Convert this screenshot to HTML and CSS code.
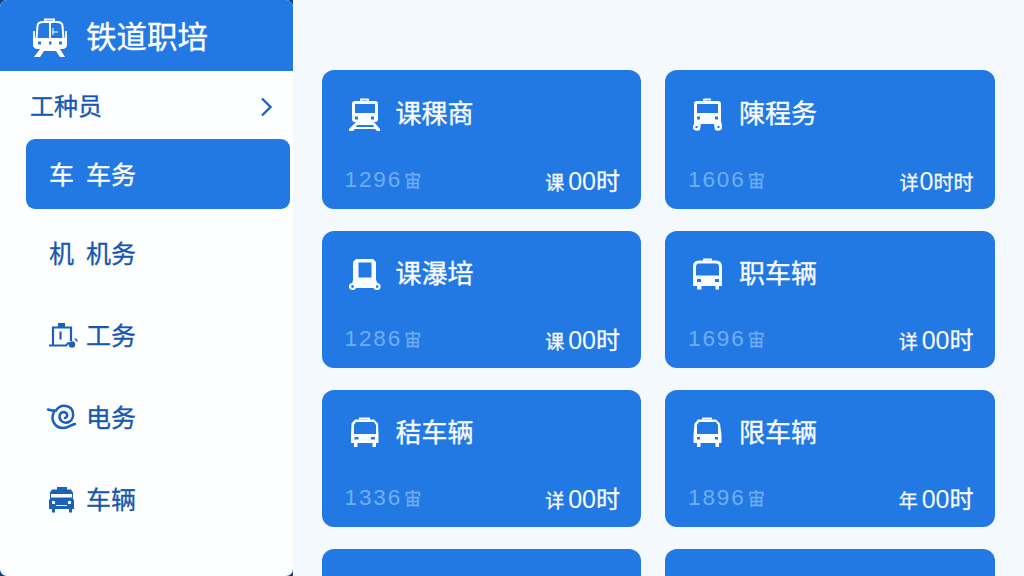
FILE: index.html
```
<!DOCTYPE html>
<html lang="zh-CN">
<head>
<meta charset="utf-8">
<title>铁道职培</title>
<link rel="stylesheet" href="styles.css">
</head>
<body>
<div class="app">
  <aside class="sidebar">
    <header class="brand">
      <svg class="brand-icon" viewBox="0 0 36 40">
        <path fill="none" stroke="currentColor" stroke-width="2" d="M13 4V1.500h9V4M4.500 21L5.500 8q0-4 6-4h13q6 0 6 4l1 13M18 4v17"/>
        <path fill="none" stroke="currentColor" stroke-width="1" d="M20 14h6M21 10v7"/>
        <path fill="none" stroke="currentColor" stroke-width="1.800" d="M2 13v10M34 13v10"/>
        <path fill="currentColor" fill-rule="evenodd" d="M1 20h34v7q0 3-4 4h-3l5 8h-5l-4-6H12l-4 6H2l6-8H5q-4-1-4-4zM6 23.500v3h3v-3zM17 23.500v3h2.500v-3zM27 23.500v3h3v-3z"/>
      </svg>
      <h1 class="brand-name">铁道职培</h1>
    </header>
    <div class="group">
      <span>工种员</span>
      <svg class="chevron" viewBox="0 0 12 20"><path d="M2 1.500l8.500 8.500L2 18.500"/></svg>
    </div>
    <nav class="menu">
      <a class="item active"><span class="mark">车</span><span>车务</span></a>
      <a class="item"><span class="mark">机</span><span>机务</span></a>
      <a class="item">
        <svg class="mark" viewBox="0 0 30 28">
          <path fill="none" stroke="currentColor" stroke-width="2.200" d="M4 23V5.500h18V19M0 23.500h17l3-3M11.500 9.500v8"/>
          <path fill="currentColor" d="M9 1h7v4H9zM25 16l3 1 1 3-2-1z"/>
          <circle cx="23" cy="22.500" r="3.200" fill="currentColor"/>
        </svg>
        <span>工务</span>
      </a>
      <a class="item">
        <svg class="mark" viewBox="0 0 30 28">
          <path fill="none" stroke="currentColor" stroke-width="2.500" stroke-linecap="round" stroke-linejoin="round" d="M-1 5.500l6 1.500M4 6.500h3C12-1 23 1 24 9c1 8-6 11.500-11 8.500-4-3-3-9 1.500-9.500 4 0 5 5 1.500 6M5 8C1 16 6 24 14 24c6 0 7-3 12-4"/>
        </svg>
        <span>电务</span>
      </a>
      <a class="item">
        <svg class="mark" viewBox="0 0 30 28">
          <path fill="currentColor" fill-rule="evenodd" d="M8 1h10v2.500h4l2 3V8H1V6.500l2-3h5zM1 8h1v3.500h21V8h1v5l1 1v9h-2v3.500h-3V23H6v3.500H3V23H0v-9l1-1zM3 15v3h3v-3zM19 15v3h3v-3zM7 19v1h11v-1z"/>
        </svg>
        <span>车辆</span>
      </a>
    </nav>
  </aside>
  <main class="courses">
    <article class="card">
      <div class="card-head">
        <svg class="card-icon" viewBox="0 0 32 34">
          <path fill="none" stroke="currentColor" stroke-width="1.800" d="M12 4V1.500h7V4"/>
          <path fill="currentColor" fill-rule="evenodd" d="M6 3h20q3 0 3 3v15q0 3-3 3h-1l6 7v2h-3l-2-2H6l-2 2H0v-2l7-7H6q-3 0-3-3V6q0-3 3-3zM6 6v9h20V6zM6 18.500v3h3v-3zM22 18.500v3h3v-3zM8 27l-1 2h18l-1-2z"/>
        </svg>
        <h2>课稞商</h2>
      </div>
      <div class="card-foot"><span class="count">1296<small>宙</small></span><span class="hours"><small>课</small>00<b>时</b></span></div>
    </article>
    <article class="card">
      <div class="card-head">
        <svg class="card-icon" viewBox="0 0 32 34">
          <path fill="none" stroke="currentColor" stroke-width="1.800" d="M12 4V1.500h7"/>
          <path fill="currentColor" fill-rule="evenodd" d="M5 3h21q3 0 3 3v17l1 4v4q-3 3-7 1l-1-6H9l-1 6q-4 2-7-1v-4h1V6q0-3 3-3zM5 6v9h21V6zM5 18.500v3h3v-3zM23 18.500v3h3v-3zM3.500 28v2h2v-2zM25.500 28v2h2v-2z"/>
        </svg>
        <h2>陳程务</h2>
      </div>
      <div class="card-foot"><span class="count">1606<small>宙</small></span><span class="hours tight"><small>详</small>0<b>时时</b></span></div>
    </article>
    <article class="card">
      <div class="card-head">
        <svg class="card-icon" viewBox="0 0 32 34">
          <path fill="currentColor" fill-rule="evenodd" d="M7 1h17l3 3v18l2 4-2 2H5l-2-2 1-4V4zM9.500 4.500v15h13v-15z"/>
          <path fill="none" stroke="currentColor" stroke-width="3" d="M5 28.500h22"/>
          <circle cx="3.500" cy="28.500" r="2.500" fill="none" stroke="currentColor" stroke-width="2.200"/>
          <circle cx="28" cy="28.500" r="2.500" fill="none" stroke="currentColor" stroke-width="2.200"/>
        </svg>
        <h2>课瀑培</h2>
      </div>
      <div class="card-foot"><span class="count">1286<small>宙</small></span><span class="hours"><small>课</small>00<b>时</b></span></div>
    </article>
    <article class="card">
      <div class="card-head">
        <svg class="card-icon" viewBox="0 0 32 34">
          <path fill="none" stroke="currentColor" stroke-width="1.800" d="M12 4V1.500h7V3"/>
          <path fill="currentColor" fill-rule="evenodd" d="M7 2.500h17q6 0 6 6V28h-3v3.500h-3.500V28h-14v3.500H5V28H1V8.500q0-6 6-6zM7 5.500Q4 5.500 4 9v8.500h23V9q0-3.500-3-3.500zM5 21v3h4v-3zM23 21v3h4v-3z"/>
        </svg>
        <h2>职车辆</h2>
      </div>
      <div class="card-foot"><span class="count">1696<small>宙</small></span><span class="hours"><small>详</small>00<b>时</b></span></div>
    </article>
    <article class="card">
      <div class="card-head">
        <svg class="card-icon" viewBox="0 0 32 34">
          <path fill="none" stroke="currentColor" stroke-width="1.800" d="M11 3V1.500h9V3"/>
          <path fill="currentColor" fill-rule="evenodd" d="M6 2.500h19l4 4 .5 11.500v8H27v4h-3.500v-4h-15v4H5v-4H2v-8l.5-11.500zM7 5L5 8v9h22V8l-2-3zM5.500 20v2.500h4V20zM22 20v2.500h4V20z"/>
        </svg>
        <h2>秸车辆</h2>
      </div>
      <div class="card-foot"><span class="count">1336<small>宙</small></span><span class="hours"><small>详</small>00<b>时</b></span></div>
    </article>
    <article class="card">
      <div class="card-head">
        <svg class="card-icon" viewBox="0 0 32 34">
          <path fill="none" stroke="currentColor" stroke-width="1.800" d="M11 3V1.500h8V3"/>
          <path fill="currentColor" fill-rule="evenodd" d="M6 2.500h18l4 4 1.500 11.500v8H27v4h-3.500v-4h-15v4H5v-4H1.500v-8l1-11.500zM7 5L5 8v9h21V8l-2-3zM5 20v2.500h3V20zM23 20v2.500h3V20z"/>
        </svg>
        <h2>限车辆</h2>
      </div>
      <div class="card-foot"><span class="count">1896<small>宙</small></span><span class="hours"><small>年</small>00<b>时</b></span></div>
    </article>
    <article class="card peek"></article>
    <article class="card peek"></article>
  </main>
</div>
</body>
</html>
```
FILE: styles.css
```
* { box-sizing: border-box; }
body {
  margin: 0;
  height: 576px;
  overflow: hidden;
  background: #f4f9fe;
  color: #1757ae;
  font-family: "Liberation Sans", "Noto Sans CJK SC", sans-serif;
}
.app { display: flex; height: 576px; overflow: hidden; background: linear-gradient(90deg, #123f85 293px, #f4f9fe 293px); }
.sidebar {
  width: 293px;
  flex: none;
  overflow: hidden;
  border-radius: 7px;
  background: #fdfeff;
  -webkit-text-stroke: 0.3px currentColor;
}
.brand {
  display: flex;
  align-items: center;
  height: 70.500px;
  padding: 4px 0 0 32px;
  gap: 18px;
  background: #2279e3;
  color: #fff;
}
.brand-icon { width: 36px; height: 40px; margin-top: 2px; }
.brand-name { margin: 0; font-size: 30.500px; font-weight: 400; line-height: 40px; }
.group {
  display: flex;
  align-items: center;
  justify-content: space-between;
  height: 68.500px;
  padding: 4px 21px 0 30px;
  font-size: 24px;
  line-height: 36px;
}
.chevron { width: 12px; height: 20px; fill: none; stroke: #1f63ba; stroke-width: 2.300; }
.menu { display: grid; grid-template-rows: 70px repeat(4, 82px); padding: 0 3px 0 26px; }
.item {
  display: flex;
  align-items: center;
  padding: 7px 0 0 23px;
  font-size: 25px;
  line-height: 36px;
}
.item.active { padding-top: 2px; border-radius: 9px; background: #2279e3; color: #fff; }
.mark { width: 30px; height: 28px; flex: none; margin-right: 7px; line-height: 28px; overflow: visible; color: #1b60bd; }
span.mark { color: inherit; }
.courses {
  display: grid;
  flex: 1;
  grid-template-columns: 319.500px 329.500px;
  grid-template-rows: 139px 137px 137px 27px;
  gap: 22px 24px;
  padding: 70px 0 0 28.500px;
}
.card {
  display: flex;
  flex-direction: column;
  justify-content: space-between;
  padding: 23px 21px 9px 23px;
  border-radius: 12px;
  background: #2279e3;
  color: #f8fbff;
}
.card:nth-child(-n+2) { padding-top: 24px; }
.card.peek { padding: 0; border-radius: 12px 12px 0 0; }
.card-head { display: flex; align-items: center; height: 40px; padding-left: 4px; gap: 15px; }
.card-icon { width: 32px; height: 34px; margin-top: 1px; }
.card h2 { margin: 0; font-size: 26px; font-weight: 400; line-height: 36px; -webkit-text-stroke: 0.35px currentColor; }
.card-foot { display: flex; align-items: center; justify-content: space-between; height: 36px; line-height: 36px; white-space: nowrap; }
.count { margin-top: -3px; color: #70aef5; font-size: 22.500px; letter-spacing: 1.900px; }
.count small { margin-left: 2px; font-size: 17px; letter-spacing: 0; -webkit-text-stroke: 0.3px currentColor; }
.hours { font-size: 25px; }
.hours small { margin-right: 4px; font-size: 19px; -webkit-text-stroke: 0.3px currentColor; }
.hours b { font-size: 24px; font-weight: 400; -webkit-text-stroke: 0.3px currentColor; }
.tight small { margin-right: 1px; }
.tight b { font-size: 20px; }
```
